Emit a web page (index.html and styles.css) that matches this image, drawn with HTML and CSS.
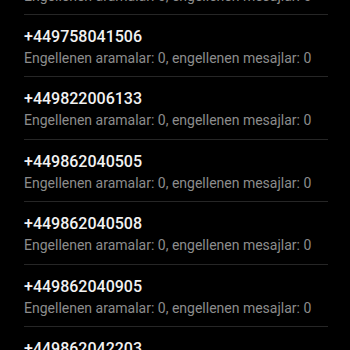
FILE: index.html
```html
<!DOCTYPE html>
<html lang="tr">
<head>
<meta charset="utf-8">
<link rel="stylesheet" href="styles.css">
</head>
<body>
<ul class="list">
  <li class="item"><div class="num">+449748031507</div><div class="sub">Engellenen aramalar: 0, engellenen mesajlar: 0</div></li>
  <li class="item"><div class="num">+449758041506</div><div class="sub">Engellenen aramalar: 0, engellenen mesajlar: 0</div></li>
  <li class="item"><div class="num">+449822006133</div><div class="sub">Engellenen aramalar: 0, engellenen mesajlar: 0</div></li>
  <li class="item"><div class="num">+449862040505</div><div class="sub">Engellenen aramalar: 0, engellenen mesajlar: 0</div></li>
  <li class="item"><div class="num">+449862040508</div><div class="sub">Engellenen aramalar: 0, engellenen mesajlar: 0</div></li>
  <li class="item"><div class="num">+449862040905</div><div class="sub">Engellenen aramalar: 0, engellenen mesajlar: 0</div></li>
  <li class="item"><div class="num">+449862042203</div><div class="sub">Engellenen aramalar: 0, engellenen mesajlar: 0</div></li>
</ul>
</body>
</html>
```
FILE: styles.css
```css
html, body {
  margin: 0;
  padding: 0;
  background: #000;
  height: 350px;
  overflow: hidden;
}
body {
  font-family: Roboto, "Noto Sans", sans-serif;
}
.list {
  list-style: none;
  margin: -47.4px 0 0 0;
  padding: 0 22px 0 24px;
}
.item {
  height: 62.4px;
  box-sizing: border-box;
  padding-top: 10px;
  border-bottom: 1px solid #262626;
}
.num {
  font-size: 16px;
  line-height: 23px;
  color: #f2f2f2;
  font-weight: 500;
}
.sub {
  font-size: 14px;
  line-height: 20px;
  color: #8c8c8c;
}
```
